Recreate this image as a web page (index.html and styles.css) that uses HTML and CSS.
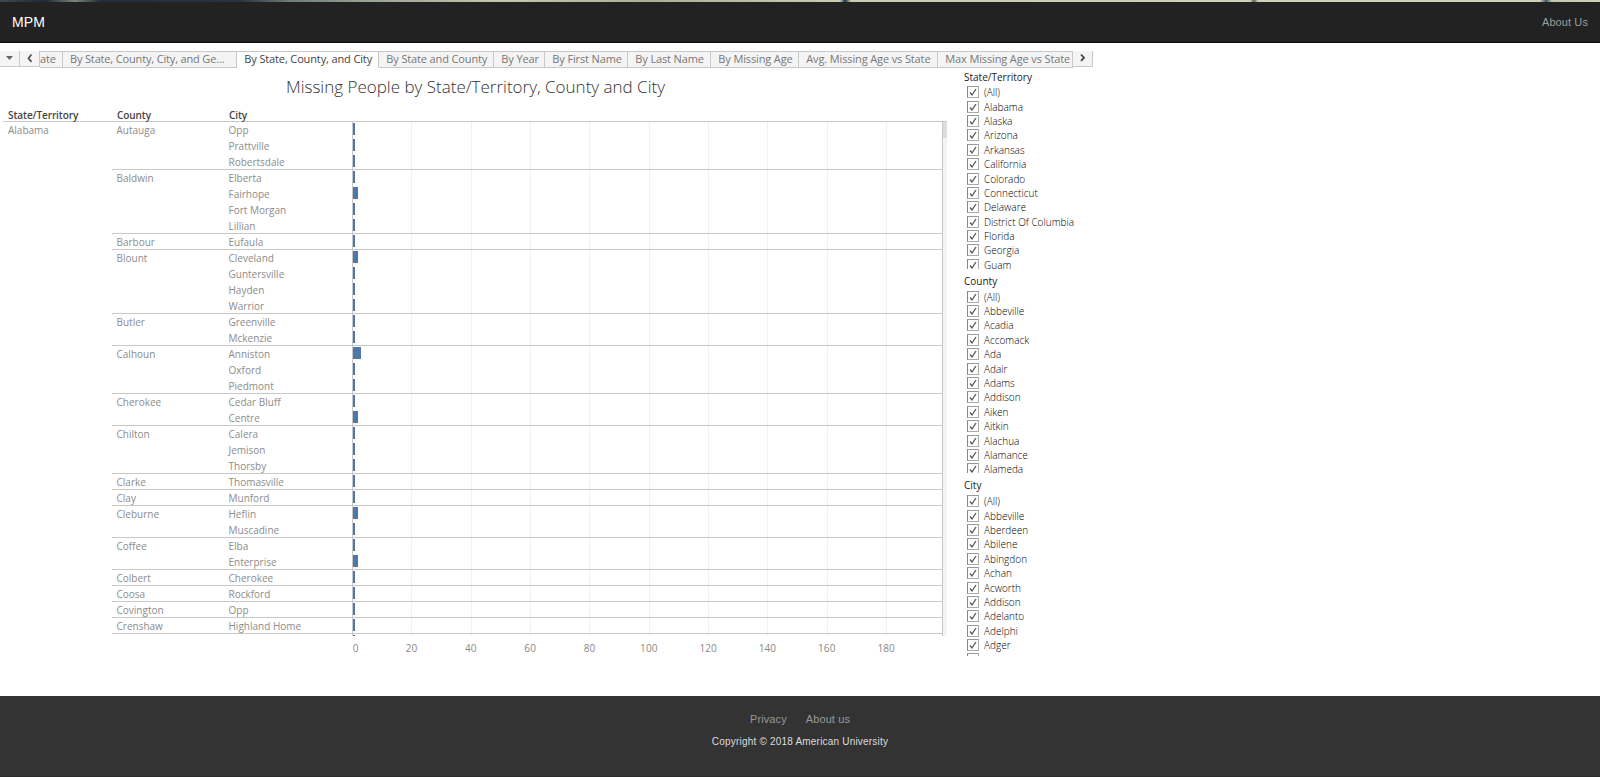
FILE: index.html
```html
<!DOCTYPE html>
<html lang="en"><head><meta charset="utf-8"><title>MPM</title><link rel="stylesheet" href="styles.css"></head>
<body>
<div class="hero"></div>
<nav class="navbar"><a class="brand">MPM</a><a class="about">About Us</a></nav>
<main class="viz">
<div class="tabs">
<span class="btn first"><svg width="19" height="15"><path d="M6 5h7l-3.500 4z" fill="#666"/></svg></span>
<span class="btn prev"><svg width="19" height="15"><path d="M11.500 3.500L8.500 7.200l3 3.700" fill="none" stroke="#555" stroke-width="1.800"/></svg></span>
<span class="tab t0"><b>ate</b></span><span class="tab t1"><b>By State, County, City, and Ge...</b></span><span class="tab t2 active"><b>By State, County, and City</b></span><span class="tab t3"><b>By State and County</b></span><span class="tab t4"><b>By Year</b></span><span class="tab t5"><b>By First Name</b></span><span class="tab t6"><b>By Last Name</b></span><span class="tab t7"><b>By Missing Age</b></span><span class="tab t8"><b>Avg. Missing Age vs State</b></span><span class="tab t9"><b>Max Missing Age vs State</b></span>
<span class="btn next"><svg width="19" height="15"><path d="M8 3.500l3 3.200-3 3.200" fill="none" stroke="#444" stroke-width="1.800"/></svg></span>
</div>
<div class="body">
<section class="sheet">
<h1><span>Missing People by State/Territory, County and City</span></h1>
<div class="head"><span>State/Territory</span><span>County</span><span>City</span></div>
<div class="chart"><div class="state">Alabama</div><div class="rows" id="rows"></div><div class="scroll"><i></i></div></div>
<div class="axis"><span class="zero">0</span><span>20</span><span>40</span><span>60</span><span>80</span><span>100</span><span>120</span><span>140</span><span>160</span><span>180</span></div>
</section>
<aside class="filters" id="filters"></aside>
</div>
</main>
<footer><div class="links"><a>Privacy</a><a>About us</a></div><p><span>Copyright © 2018 American University</span></p></footer>
<script src="app.js"></script>
</body></html>
```

FILE: styles.css
```css
*{box-sizing:border-box}
body{margin:0;width:1600px;height:777px;overflow:hidden;background:#fff;font-family:"Open Sans","Noto Sans",sans-serif;display:flex;flex-direction:column}
.hero{height:2px;flex:none;background:linear-gradient(90deg,#3c4a50 0,#1c2836 45px,#7d8678 75px,#222e3b 100px,#273441 240px,#6f7c78 290px,#98a292 365px,#c3c8ae 500px,#a9b09a 650px,#c9cdb3 840px,#14304a 845px,#c9cdb3 851px,#cdd1b8 1250px,#58605a 1254px,#cdd1b8 1258px,#cdd1b8 1540px,#3c5a68 1546px,#c4c8ae 1552px,#cdd1b8)}
.navbar{height:41px;flex:none;background:#222;border-bottom:1px solid #080808;display:flex;justify-content:space-between;align-items:center;padding:0 12px;font-family:"Liberation Sans",Arial,sans-serif}
.brand{color:#fff;font-size:14px;letter-spacing:.1px}
.about{color:#9d9d9d;font-size:11px;letter-spacing:.1px}
.viz{height:653px;flex:none;padding-top:8px}
.tabs{display:flex;height:17px;width:1093px}
.btn{background:#f4f4f4;border-right:1px solid #c8c8c8;height:16px;width:20px;flex:none}
.btn svg{display:block}
.next{border-bottom:1px solid #c8c8c8}
.first,.prev{border-bottom:1px solid #ccc}
.tab{flex:none;border:solid #c8c8c8;border-width:1px 1px 1px 0;background:#f4f4f4;color:#777;font-size:11px;letter-spacing:-.13px;line-height:14px;white-space:nowrap;overflow:hidden}
.tab b{font-weight:400;display:block;padding-left:7.300px}
.tab.active{background:#fff;border-bottom-color:#fff;color:#444}
.t0{width:23px}.tab.t0 b{padding-left:0}
.tab.t1 b{padding-left:7px;letter-spacing:-.16px}
.t1{width:174px}.t2{width:142px}.t3{width:115px}.t4{width:51px}.t5{width:83px}.t6{width:83px}.t7{width:88px}.t8{width:139px}.t9{width:135px}
.body{display:flex}
.sheet{width:947px}
h1{margin:0;height:37px;padding:2px 0 0 286px;font-size:17px;font-weight:300;line-height:34px;color:#333;white-space:nowrap}
.head{height:17px;margin-left:3px;border-bottom:1px solid #c8c8c8;font-size:10px;font-weight:600;letter-spacing:-.08px;color:#444;line-height:20px;display:grid;grid-template-columns:109px 112px 1fr;padding-left:5px}
.chart{display:flex;height:514px;font-size:10px;color:#8c8c8c;overflow:hidden}
.state{width:112px;padding-left:8px;line-height:16px;flex:none}
.rows{width:831px;flex:none;border-right:1px solid #c8c8c8;overflow:hidden}
.row{display:grid;grid-template-columns:112px 128px 1fr;height:16px;line-height:16px;padding-left:5px;border-bottom:1px solid transparent}
.row span:not(.plot){text-indent:-.5px;height:15px}
.row.end{border-bottom-color:#c8c8c8}
.plot{height:16px;margin:0 0 0 -5px;border-left:1px solid #c8c8c8;padding-top:1px;background:repeating-linear-gradient(90deg,transparent 0 58.330px,#f1f1f1 58.330px 59.330px)}
.row.end .plot{height:15px}
.bar{display:block;height:12px;background:#4e79a7}
.scroll{width:4px;background:#f4f4f4}.scroll i{display:block;height:16px;background:#ddd}
.axis{display:flex;margin-left:322.500px;font-size:10px;letter-spacing:.1px;color:#888;line-height:25px}
.axis span{width:59.330px;text-align:center}
.axis .zero{padding-left:7px}
.filters{padding-left:17px;width:151px;color:#333;font-size:10px}
.filter{height:204.500px}
.filter h2{margin:0;font-size:10px;font-weight:400;line-height:17px;height:17px;color:#222}
.filter:first-child h2{line-height:18px}
.list{height:183.500px;overflow:hidden;padding-left:3px}
.filter:last-child .list{height:162px}
.filter:last-child{height:188px}
.item{display:flex;height:14.400px;line-height:14px;gap:5px;font-size:10px;font-weight:300;align-items:center;color:#000;white-space:nowrap}
.box{width:12px;height:12px;border:1px solid #aaa;border-color:#999 #aaa #aaa #888;flex:none}
.box svg{display:block}
footer{height:81px;flex:none;background:#333;border-bottom:1px solid #2a2a2a;font-family:"Liberation Sans",Arial,sans-serif;text-align:center}
.links{display:flex;gap:19px;justify-content:center;font-size:11px;letter-spacing:.1px;color:#999;padding-top:16px;line-height:14px}
footer p{margin:9px 0 0;font-size:10px;letter-spacing:.2px;line-height:14px;color:#ddd}
```

FILE: app.js
```js
const counties = [
  ["Autauga", "Opp", "Prattville", "Robertsdale"],
  ["Baldwin", "Elberta", "Fairhope:2", "Fort Morgan", "Lillian"],
  ["Barbour", "Eufaula"],
  ["Blount", "Cleveland:2", "Guntersville", "Hayden", "Warrior"],
  ["Butler", "Greenville", "Mckenzie"],
  ["Calhoun", "Anniston:3", "Oxford", "Piedmont"],
  ["Cherokee", "Cedar Bluff", "Centre:2"],
  ["Chilton", "Calera", "Jemison", "Thorsby"],
  ["Clarke", "Thomasville"],
  ["Clay", "Munford"],
  ["Cleburne", "Heflin:2", "Muscadine"],
  ["Coffee", "Elba", "Enterprise:2"],
  ["Colbert", "Cherokee"],
  ["Coosa", "Rockford"],
  ["Covington", "Opp"],
  ["Crenshaw", "Highland Home"],
  ["", ""]
];
const barWidth = { 1: 2, 2: 5, 3: 8 };
document.getElementById("rows").innerHTML = counties.map(([county, ...cities]) =>
  cities.map((c, i) => {
    const [city, n = 1] = c.split(":");
    return `<div class="row${i === cities.length - 1 ? " end" : ""}"><span>${i ? "" : county}</span><span>${city}</span><span class="plot"><i class="bar" style="width:${barWidth[n]}px"></i></span></div>`;
  }).join("")).join("");

const filters = {
  "State/Territory": "(All),Alabama,Alaska,Arizona,Arkansas,California,Colorado,Connecticut,Delaware,District Of Columbia,Florida,Georgia,Guam",
  "County": "(All),Abbeville,Acadia,Accomack,Ada,Adair,Adams,Addison,Aiken,Aitkin,Alachua,Alamance,Alameda",
  "City": "(All),Abbeville,Aberdeen,Abilene,Abingdon,Achan,Acworth,Addison,Adelanto,Adelphi,Adger,"
};
const check = '<span class="box"><svg width="10" height="10"><path d="M2 5.500L4 8L8 2" fill="none" stroke="#555" stroke-width="1.300"/></svg></span>';
document.getElementById("filters").innerHTML = Object.entries(filters).map(([name, items]) =>
  `<div class="filter"><h2><span>${name}</span></h2><div class="list">${items.split(",").map(t => `<div class="item">${check}<span>${t}</span></div>`).join("")}</div></div>`).join("");
```
